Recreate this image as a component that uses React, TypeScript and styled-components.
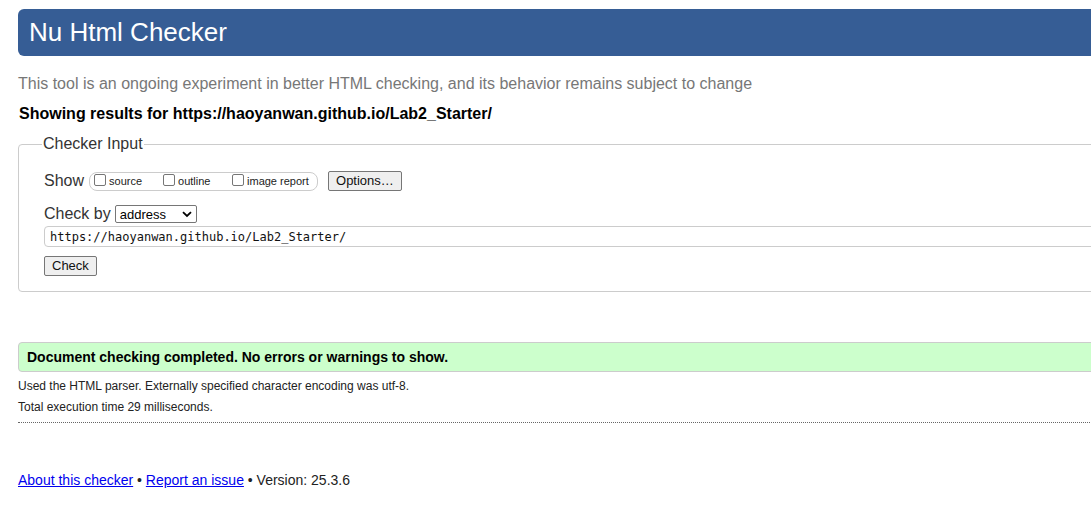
import React from "react";
import styled, { createGlobalStyle } from "styled-components";

const Global = createGlobalStyle`
  html, body { margin: 0; padding: 0; background: #fff; overflow: hidden; }
  body { font-family: Arial, "Liberation Sans", sans-serif; color: #222; }
`;

const Page = styled.div`
  width: 1130px;
  padding: 9px 0 0 18px;
  display: flex;
  flex-direction: column;
`;

const Header = styled.h1`
  margin: 0;
  height: 47px;
  background: #365d95;
  color: #fff;
  border-radius: 6px;
  font-weight: normal;
  font-size: 26px;
  line-height: 47px;
  padding-left: 11px;
`;

const Intro = styled.p`
  margin: 18px 0 0;
  font-size: 16px;
  color: #777;
  line-height: 20px;
`;

const Results = styled.p`
  margin: 10px 0 0 1px;
  font-size: 16px;
  font-weight: bold;
  color: #000;
  line-height: 20px;
`;

const Fieldset = styled.fieldset`
  margin: 11px 0 0;
  border: 1px solid #ccc;
  border-radius: 4px;
  padding: 10px 25px 15px 25px;
  display: flex;
  flex-direction: column;
`;

const Legend = styled.legend`
  font-size: 16px;
  color: #333;
  padding: 0 1px;
  margin-left: -2px;
`;

const Row = styled.div<{ $mt?: number }>`
  display: flex;
  align-items: center;
  margin-top: ${(p) => p.$mt ?? 0}px;
  font-size: 16px;
  color: #333;
`;

const CheckGroup = styled.div`
  display: flex;
  align-items: center;
  margin-left: 5px;
  border: 1px solid #ccc;
  border-radius: 8px;
  height: 17px;
  padding: 0 1px 0 4px;
`;

const CheckItem = styled.label<{ $w: number }>`
  display: flex;
  align-items: center;
  width: ${(p) => p.$w}px;
  font-size: 11px;
  color: #222;
`;

const Box = styled.span`
  display: inline-block;
  width: 12px;
  height: 12px;
  box-sizing: border-box;
  border: 1px solid #767676;
  border-radius: 2px;
  margin-right: 3px;
  margin-top: -3px;
`;

const Button = styled.button`
  font-family: Arial, "Liberation Sans", sans-serif;
  font-size: 13px;
  color: #111;
  background: #efefef;
  border: 1px solid #767676;
  border-radius: 2px;
  padding: 0 7px;
  height: 20px;
  line-height: 18px;
`;

const OptionsButton = styled(Button)`
  margin-left: 10px;
`;

const Select = styled.div`
  margin-left: 4px;
  width: 82px;
  height: 18px;
  box-sizing: border-box;
  border: 1px solid #767676;
  border-radius: 2px;
  display: flex;
  align-items: center;
  justify-content: space-between;
  padding: 0 4px;
  font-size: 13px;
  color: #000;
`;

const UrlBox = styled.div`
  margin-top: 3px;
  margin-right: -40px;
  height: 21px;
  box-sizing: border-box;
  border: 1px solid #ccc;
  border-radius: 4px 0 0 4px;
  display: flex;
  align-items: center;
  padding-left: 5px;
  font-family: "DejaVu Sans Mono", "Liberation Mono", monospace;
  font-size: 12px;
  color: #111;
`;

const CheckRow = styled.div`
  margin-top: 9px;
  display: flex;
`;

const Success = styled.div`
  margin-top: 50px;
  height: 30px;
  box-sizing: border-box;
  background: #ccffcc;
  border: 1px solid #ccc;
  border-radius: 4px;
  display: flex;
  align-items: center;
  padding-left: 8px;
  font-size: 14px;
  font-weight: bold;
  color: #000;
`;

const Detail = styled.p<{ $mt: number }>`
  margin: ${(p) => p.$mt}px 0 0;
  font-size: 12px;
  color: #222;
  line-height: 14px;
`;

const Divider = styled.hr`
  margin: 8px 0 0;
  border: 0;
  border-top: 1px dotted #666;
  height: 0;
`;

const Footer = styled.p`
  margin: 49px 0 0;
  font-size: 14px;
  color: #222;
  line-height: 16px;
`;

const Link = styled.a`
  color: #0000ee;
  text-decoration: underline;
`;

const Chevron = () => (
  <svg width="10" height="7" viewBox="0 0 10 7">
    <path d="M1 1.2 L5 5 L9 1.2" fill="none" stroke="#000" strokeWidth="1.8" />
  </svg>
);

export default function App() {
  return (
    <>
      <Global />
      <Page>
        <Header>Nu Html Checker</Header>
        <Intro>
          This tool is an ongoing experiment in better HTML checking, and its
          behavior remains subject to change
        </Intro>
        <Results>Showing results for https://haoyanwan.github.io/Lab2_Starter/</Results>
        <Fieldset>
          <Legend>Checker Input</Legend>
          <Row $mt={8}>
            Show
            <CheckGroup>
              <CheckItem $w={69}>
                <Box />
                source
              </CheckItem>
              <CheckItem $w={69}>
                <Box />
                outline
              </CheckItem>
              <CheckItem $w={84}>
                <Box />
                image report
              </CheckItem>
            </CheckGroup>
            <OptionsButton>Options…</OptionsButton>
          </Row>
          <Row $mt={14}>
            Check by
            <Select>
              address
              <Chevron />
            </Select>
          </Row>
          <UrlBox>https://haoyanwan.github.io/Lab2_Starter/</UrlBox>
          <CheckRow>
            <Button>Check</Button>
          </CheckRow>
        </Fieldset>
        <Success>Document checking completed. No errors or warnings to show.</Success>
        <Detail $mt={7}>
          Used the HTML parser. Externally specified character encoding was
          utf-8.
        </Detail>
        <Detail $mt={7}>Total execution time 29 milliseconds.</Detail>
        <Divider />
        <Footer>
          <Link href="#">About this checker</Link> •{" "}
          <Link href="#">Report an issue</Link> • Version: 25.3.6
        </Footer>
      </Page>
    </>
  );
}
